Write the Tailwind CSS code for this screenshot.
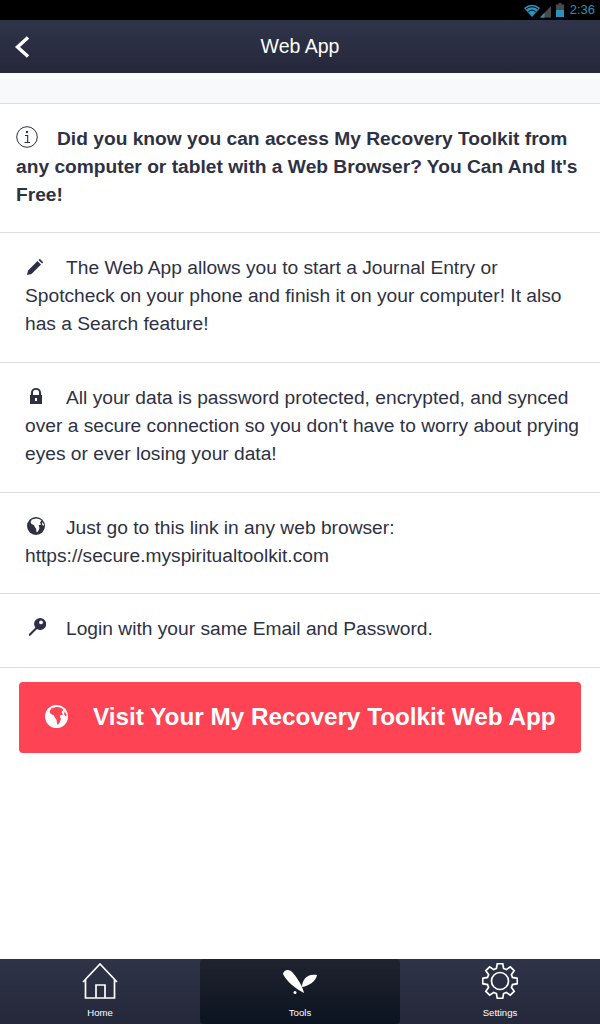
<!DOCTYPE html>
<html>
<head>
<meta charset="utf-8">
<script src="https://cdn.jsdelivr.net/npm/@tailwindcss/browser@4"></script>
</head>
<body class="bg-white font-['Liberation_Sans',Arial,sans-serif] text-[#2e3144]">
<div class="relative flex h-[1024px] w-[600px] flex-col overflow-hidden">
  <div class="flex h-[20px] items-center justify-end bg-black pr-[5px]">
    <svg width="27" height="14" viewBox="0 0 27 14" class="mt-[2px]">
      <path d="M0 4Q8-2.500 16 4L8 13Z" fill="#2a93bd"/>
      <path d="M2 5Q8 .5 14 5" stroke="#000" stroke-width="1" fill="none"/>
      <path d="M4.300 7.800Q8 4.500 11.700 7.800" stroke="#000" stroke-width="1" fill="none"/>
      <path d="M16 13.500L27 2V13.500Z" fill="#4a4a4a"/><path d="M16 13.500L20.500 8.800V13.500Z" fill="#2a93bd"/>
    </svg>
    <svg width="8" height="14" viewBox="0 0 8 14" class="ml-[5px]"><path d="M2.500 0h3v1.500H8V14H0V1.500h2.500Z" fill="#4a4a4a"/><rect y="7" width="8" height="7" fill="#2a93bd"/></svg>
    <span class="ml-[6px] text-[13px] leading-[20px] text-[#2a93bd]">2:36</span>
  </div>
  <header class="relative flex h-[53px] items-center justify-center bg-gradient-to-b from-[#30344a] to-[#25283a]">
    <svg class="absolute left-[13px] top-[15px]" width="18" height="24" viewBox="0 0 18 24"><path d="M15 2.500L4.500 12L15 21.500" fill="none" stroke="#fff" stroke-width="3.400"/></svg>
    <span class="text-[19.5px] text-white">Web App</span>
  </header>
  <div class="h-[30px] bg-[#f8f9fb]"></div>
  <main class="flex-1 text-[19.2px] leading-[28px]">
    <div class="border-y border-[#dedede] pb-[23px] pl-4 pr-2 pt-[21px] font-bold">
      <span class="inline-block w-[41px] align-top"><svg class="mt-[1px]" width="22" height="22" viewBox="0 0 22 22"><circle cx="11" cy="11" r="10.300" fill="none" stroke="#2e3144" stroke-width="1"/><circle cx="11" cy="6" r="1.200" fill="#2e3144"/><path d="M9 9.500h2.700v7M8.500 16.500h5.500" fill="none" stroke="#2e3144" stroke-width="1.100"/></svg></span>Did you know you can access My Recovery Toolkit from any computer or tablet with a Web Browser? You Can And It's Free!
    </div>
    <div class="border-b border-[#dedede] pb-6 pl-[25px] pr-4 pt-[21px]">
      <span class="inline-block w-[41px] align-top"><svg class="ml-[2px] mt-[5px]" width="16" height="16" viewBox="0 0 16 16"><path d="M0 16L1 11.500L10.500 2L14 5.500L4.500 15ZM11.500 1L12.500 0H13L16 3V3.500L15 4.500Z" fill="#2e3144"/></svg></span>The Web App allows you to start a Journal Entry or Spotcheck on your phone and finish it on your computer! It also has a Search feature!
    </div>
    <div class="border-b border-[#dedede] pb-6 pl-[25px] pr-4 pt-[21px]">
      <span class="inline-block w-[41px] align-top"><svg class="ml-[5px] mt-[4px]" width="12" height="16" viewBox="0 0 12 16"><path fill-rule="evenodd" d="M1 7V4.500A5 4.500 0 0 1 11 4.500V7H12V16H0V7ZM3 7H9V4.500A3 2.700 0 0 0 3 4.500Z" fill="#2e3144"/><rect x="5" y="10" width="2" height="3" fill="#fff"/></svg></span>All your data is password protected, encrypted, and synced over a secure connection so you don't have to worry about prying eyes or ever losing your data!
    </div>
    <div class="border-b border-[#dedede] pb-[23px] pl-[25px] pr-4 pt-[21px]">
      <span class="inline-block w-[41px] align-top"><svg class="ml-[2px] mt-[3px]" width="18" height="18" viewBox="0 0 18 18"><circle cx="9" cy="9" r="9" fill="#2e3144"/><path d="M5 2.500L9 1.500L12 2L14.500 3.500L13 5.500L14 7.500L11.500 8.500L12.500 11L11.500 13.500L10 15.500L9.500 15L9 11.500L7.500 9.500L7 8L4.500 7L3.500 5ZM15.200 5L17 7.500L16.500 9L15 7.500Z" fill="#fff"/></svg></span>Just go to this link in any web browser: https://secure.myspiritualtoolkit.com
    </div>
    <div class="border-b border-[#dedede] pb-6 pl-[25px] pr-4 pt-[21px]">
      <span class="inline-block w-[41px] align-top"><svg class="ml-[3px] mt-[3px]" width="18" height="19" viewBox="0 0 18 19"><path d="M1 16L8.500 8.500L10 10L2.500 17.500L1 18Z" fill="#2e3144"/><path fill-rule="evenodd" d="M12 0A6 6 0 1 1 6.500 8A6 6 0 0 1 12 0ZM13 2.500A1.900 1.900 0 1 0 13.100 6.300A1.900 1.900 0 0 0 13 2.500Z" fill="#2e3144"/></svg></span>Login with your same Email and Password.
    </div>
    <a class="mx-[19px] mt-[14px] flex h-[71px] items-center rounded-[4px] bg-[#fd4354] pb-[2px] pl-[26px] text-[24.3px] font-bold text-white">
      <svg class="mr-[25px] shrink-0" width="23" height="23" viewBox="0 0 18 18"><circle cx="9" cy="9" r="9" fill="#fff"/><path d="M5 2.500L9 1.500L12 2L14.500 3.500L13 5.500L14 7.500L11.500 8.500L12.500 11L11.500 13.500L10 15.500L9.500 15L9 11.500L7.500 9.500L7 8L4.500 7L3.500 5ZM15.200 5L17 7.500L16.500 9L15 7.500Z" fill="#fd4354"/></svg>
      <span>Visit Your My Recovery Toolkit Web App</span>
    </a>
  </main>
  <nav class="grid h-[65px] grid-cols-3 bg-gradient-to-b from-[#2f3348] to-[#25283a] text-center text-[9.6px] font-normal text-white">
    <div class="flex flex-col items-center pt-[4px]">
      <svg width="36" height="36" viewBox="0 0 36 36" fill="none" stroke="#fff" stroke-width="1.700"><path d="M1 19L18 1L35 19M3.500 16.500V35H32.500V16.500M14 35V22H23V35"/></svg>
      <span class="mt-[7px] leading-[14px]">Home</span>
    </div>
    <div class="flex flex-col items-center rounded-[4px] bg-gradient-to-b from-[#20232f] to-[#0a1420] pt-[4px]">
      <svg width="36" height="36" viewBox="0 0 36 36" fill="#fff"><path d="M1 11C2 6 8 6 11 10C16 16 21 24 22 30C14 26 5 19 1 11Z"/><path d="M20 24C20 17 25 10 35 12C34 18 27 23 20 24Z"/><circle cx="13" cy="29.500" r="1.500"/></svg>
      <span class="mt-[7px] leading-[14px]">Tools</span>
    </div>
    <div class="flex flex-col items-center pt-[4px]">
      <svg width="36" height="36" viewBox="0 0 36 36" fill="none" stroke="#fff" stroke-width="1.700"><circle cx="18" cy="18" r="8.500"/><path d="M15.300 .7H20.700L21.600 5.500L24.300 6.600L28.300 3.800L32.200 7.700L29.400 11.700L30.500 14.400L35.300 15.300V20.700L30.500 21.600L29.400 24.300L32.200 28.300L28.300 32.200L24.300 29.400L21.600 30.500L20.700 35.300H15.300L14.400 30.500L11.700 29.400L7.700 32.200L3.800 28.300L6.600 24.300L5.500 21.600L.7 20.700V15.300L5.500 14.400L6.600 11.700L3.800 7.700L7.700 3.800L11.700 6.600L14.400 5.500Z"/></svg>
      <span class="mt-[7px] leading-[14px]">Settings</span>
    </div>
  </nav>
</div>
</body>
</html>
